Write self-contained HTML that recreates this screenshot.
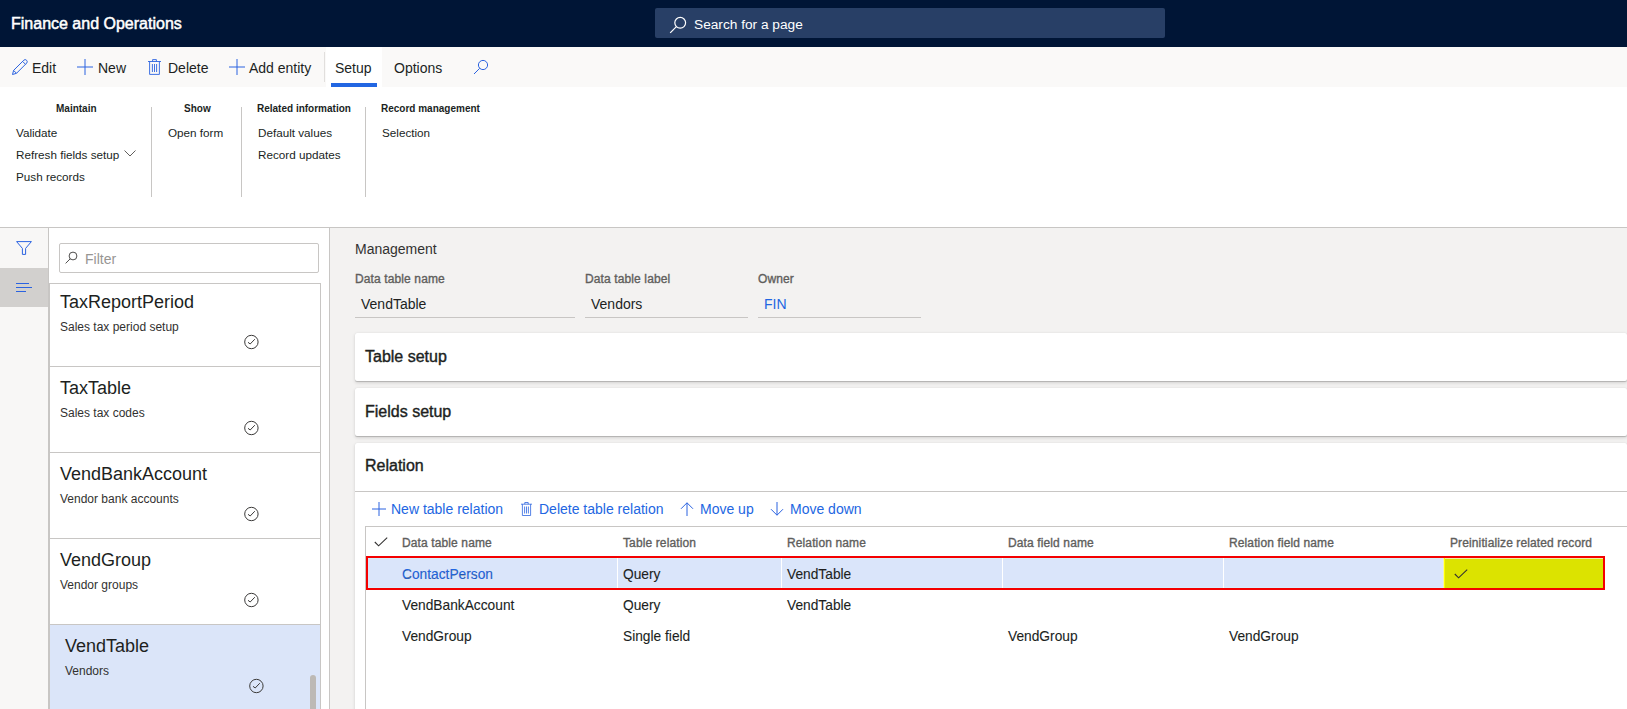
<!DOCTYPE html>
<html><head><meta charset="utf-8">
<style>
*{box-sizing:border-box;margin:0;padding:0}
html,body{width:1627px;height:709px;overflow:hidden;background:#fff;font-family:"Liberation Sans",sans-serif;color:#201f1e}
.a{position:absolute;white-space:nowrap;line-height:16px}
svg.a{line-height:0}
#hdr{position:absolute;left:0;top:0;width:1627px;height:47px;background:#001536}
#search{position:absolute;left:655px;top:8px;width:510px;height:30px;background:#283f66;border-radius:2px}
#tb{position:absolute;left:0;top:47px;width:1627px;height:40px;background:#faf9f8}
.tt{font-size:14px;color:#201f1e}
.rh{font-size:10px;font-weight:bold;color:#201f1e}
.ri{font-size:11.7px;color:#201f1e}
.vsep{position:absolute;width:1px;background:#c8c6c4}
#line227{position:absolute;left:0;top:227px;width:1627px;height:1px;background:#c8c6c4}
#rail{position:absolute;left:0;top:228px;width:49px;height:481px;background:#f8f7f6;border-right:1px solid #c8c6c4}
#panel{position:absolute;left:49px;top:228px;width:281px;height:481px;background:#fff;border-right:1px solid #c8c6c4}
#main{position:absolute;left:330px;top:228px;width:1297px;height:481px;background:#f3f2f1}
.item{position:absolute;left:0;width:271px;height:86px;border-bottom:1px solid #c8c6c4;background:#fff}
.it{font-size:18px;color:#201f1e}
.is{font-size:12px;color:#323130}
.lbl{font-size:12px;color:#605e5c;-webkit-text-stroke:0.35px #605e5c;letter-spacing:0.12px}
.val{font-size:14px;color:#201f1e}
.card{position:absolute;left:25px;width:1272px;background:#fff;border-radius:2px;box-shadow:0 1px 0 rgba(0,0,0,.07),0 1.6px 3.6px rgba(0,0,0,.13),0 .3px .9px rgba(0,0,0,.11)}
.ch{font-size:16px;color:#201f1e;-webkit-text-stroke:0.4px #201f1e}
.act{font-size:14px;color:#2266e2}
.gh{font-size:12px;color:#605e5c;-webkit-text-stroke:0.35px #605e5c;letter-spacing:0.12px}
.gc{font-size:13.75px;color:#201f1e;-webkit-text-stroke:0.1px #201f1e}
</style></head>
<body>
<div id="hdr">
  <div class="a" style="left:11px;top:16px;font-size:16px;color:#fff;-webkit-text-stroke:0.5px #fff">Finance and Operations</div>
  <div id="search">
    <svg class="a" style="left:14px;top:8px" width="18" height="18" viewBox="0 0 18 18"><circle cx="11.2" cy="6.8" r="5.4" fill="none" stroke="#fff" stroke-width="1.2"/><line x1="7.4" y1="10.6" x2="1.2" y2="16.8" stroke="#fff" stroke-width="1.2"/></svg>
    <div class="a" style="left:39px;top:9px;font-size:13.7px;color:#fff">Search for a page</div>
  </div>
</div>

<div id="tb">
  <!-- pencil -->
  <svg class="a" style="left:11px;top:11px" width="18" height="18" viewBox="0 0 18 18"><path d="M1.5 16.5 L2.6 12.4 L12.8 2.2 Q14.2 0.9 15.6 2.3 Q16.9 3.7 15.7 5.1 L5.5 15.3 Z M11.6 3.4 L14.5 6.3 M2.6 12.4 L5.5 15.3" fill="none" stroke="#2b63e0" stroke-width="1" stroke-linejoin="round"/></svg>
  <div class="a tt" style="left:32px;top:13px">Edit</div>
  <!-- plus -->
  <svg class="a" style="left:77px;top:12px" width="16" height="16" viewBox="0 0 16 16"><path d="M8 0 V16 M0 8 H16" stroke="#2b63e0" stroke-width="1"/></svg>
  <div class="a tt" style="left:98px;top:13px">New</div>
  <!-- trash -->
  <svg class="a" style="left:148px;top:12px" width="14" height="16" viewBox="0 0 14 16"><path d="M0 2.5 H13 M4.6 2.5 V0.6 H8.4 V2.5 M1.6 2.5 V15.4 H11.4 V2.5 M4.4 5 V13 M6.5 5 V13 M8.6 5 V13" fill="none" stroke="#2b63e0" stroke-width="0.9"/></svg>
  <div class="a tt" style="left:168px;top:13px">Delete</div>
  <svg class="a" style="left:229px;top:12px" width="16" height="16" viewBox="0 0 16 16"><path d="M8 0 V16 M0 8 H16" stroke="#2b63e0" stroke-width="1"/></svg>
  <div class="a tt" style="left:249px;top:13px">Add entity</div>
  <div class="vsep" style="left:324px;top:5px;height:30px;background:#e1dfdd"></div>
  <div class="a" style="left:326px;top:0;width:56px;height:40px;background:#fff"></div>
  <div class="a tt" style="left:335px;top:13px">Setup</div>
  <div class="a" style="left:331px;top:36px;width:46px;height:4px;background:#2266e2"></div>
  <div class="a tt" style="left:394px;top:13px">Options</div>
  <svg class="a" style="left:473px;top:12px" width="16" height="16" viewBox="0 0 16 16"><circle cx="10" cy="6" r="4.6" fill="none" stroke="#2b63e0" stroke-width="1"/><line x1="6.7" y1="9.3" x2="1" y2="15" stroke="#2b63e0" stroke-width="1"/></svg>
</div>

<!-- ribbon -->
<div class="a rh" style="left:56px;top:101px">Maintain</div>
<div class="a rh" style="left:184px;top:101px">Show</div>
<div class="a rh" style="left:257px;top:101px">Related information</div>
<div class="a rh" style="left:381px;top:101px">Record management</div>
<div class="vsep" style="left:151px;top:107px;height:90px"></div>
<div class="vsep" style="left:241px;top:107px;height:90px"></div>
<div class="vsep" style="left:365px;top:107px;height:90px"></div>
<div class="a ri" style="left:16px;top:125px">Validate</div>
<div class="a ri" style="left:16px;top:147px">Refresh fields setup</div>
<svg class="a" style="left:124px;top:150px" width="12" height="7" viewBox="0 0 12 7"><path d="M0.5 0.5 L6 6 L11.5 0.5" fill="none" stroke="#605e5c" stroke-width="1"/></svg>
<div class="a ri" style="left:16px;top:169px">Push records</div>
<div class="a ri" style="left:168px;top:125px">Open form</div>
<div class="a ri" style="left:258px;top:125px">Default values</div>
<div class="a ri" style="left:258px;top:147px">Record updates</div>
<div class="a ri" style="left:382px;top:125px">Selection</div>

<div id="line227"></div>
<div id="rail">
  <svg class="a" style="left:16px;top:13px" width="16" height="14" viewBox="0 0 16 14"><path d="M0.6 0.6 H15.4 L9.6 7.4 V13.4 H6.4 V7.4 Z" fill="none" stroke="#2b63e0" stroke-width="1" stroke-linejoin="round"/></svg>
  <div class="a" style="left:0;top:40px;width:48px;height:39px;background:#d2d0ce"></div>
  <svg class="a" style="left:16px;top:55px" width="16" height="10" viewBox="0 0 16 10"><path d="M0 0.5 H13 M0 4.5 H16 M0 8.5 H10" stroke="#2b63e0" stroke-width="1"/></svg>
</div>
<div id="panel">
  <div class="a" style="left:10px;top:15px;width:260px;height:30px;border:1px solid #c8c6c4;border-radius:2px;background:#fff">
    <svg class="a" style="left:5px;top:7px" width="14" height="14" viewBox="0 0 14 14"><circle cx="8" cy="5" r="3.9" fill="none" stroke="#3b3a39" stroke-width="0.9"/><line x1="5.2" y1="7.8" x2="0.6" y2="12.4" stroke="#3b3a39" stroke-width="0.9"/></svg>
    <div class="a" style="left:25px;top:7px;font-size:14px;color:#979593">Filter</div>
  </div>
  <div class="a" style="left:0;top:55px;width:272px;height:426px;border-left:1px solid #c8c6c4;border-top:1px solid #c8c6c4;border-right:1px solid #c8c6c4;overflow:hidden">
    <div class="item" style="top:-3px"><div class="a it" style="left:10px;top:11px;line-height:20px">TaxReportPeriod</div><div class="a is" style="left:10px;top:38px">Sales tax period setup</div><svg class="a" style="left:193px;top:53px" width="16" height="16" viewBox="0 0 16 16"><circle cx="8.4" cy="8" r="6.7" fill="none" stroke="#3b3a39" stroke-width="1"/><path d="M5 8.3 L7.2 10 L11.8 5.2" fill="none" stroke="#3b3a39" stroke-width="1"/></svg></div>
    <div class="item" style="top:83px"><div class="a it" style="left:10px;top:11px;line-height:20px">TaxTable</div><div class="a is" style="left:10px;top:38px">Sales tax codes</div><svg class="a" style="left:193px;top:53px" width="16" height="16" viewBox="0 0 16 16"><circle cx="8.4" cy="8" r="6.7" fill="none" stroke="#3b3a39" stroke-width="1"/><path d="M5 8.3 L7.2 10 L11.8 5.2" fill="none" stroke="#3b3a39" stroke-width="1"/></svg></div>
    <div class="item" style="top:169px"><div class="a it" style="left:10px;top:11px;line-height:20px">VendBankAccount</div><div class="a is" style="left:10px;top:38px">Vendor bank accounts</div><svg class="a" style="left:193px;top:53px" width="16" height="16" viewBox="0 0 16 16"><circle cx="8.4" cy="8" r="6.7" fill="none" stroke="#3b3a39" stroke-width="1"/><path d="M5 8.3 L7.2 10 L11.8 5.2" fill="none" stroke="#3b3a39" stroke-width="1"/></svg></div>
    <div class="item" style="top:255px"><div class="a it" style="left:10px;top:11px;line-height:20px">VendGroup</div><div class="a is" style="left:10px;top:38px">Vendor groups</div><svg class="a" style="left:193px;top:53px" width="16" height="16" viewBox="0 0 16 16"><circle cx="8.4" cy="8" r="6.7" fill="none" stroke="#3b3a39" stroke-width="1"/><path d="M5 8.3 L7.2 10 L11.8 5.2" fill="none" stroke="#3b3a39" stroke-width="1"/></svg></div>
    <div class="item" style="top:341px;background:#dbe5f9;height:90px"><div class="a it" style="left:15px;top:11px;line-height:20px">VendTable</div><div class="a is" style="left:15px;top:38px">Vendors</div><svg class="a" style="left:198px;top:53px" width="16" height="16" viewBox="0 0 16 16"><circle cx="8.4" cy="8" r="6.7" fill="none" stroke="#3b3a39" stroke-width="1"/><path d="M5 8.3 L7.2 10 L11.8 5.2" fill="none" stroke="#3b3a39" stroke-width="1"/></svg></div>
    <div class="a" style="left:260px;top:391px;width:6px;height:45px;border-radius:3px;background:#bdb9b5"></div>
  </div>
</div>

<div id="main">
  <div class="a" style="left:25px;top:13px;font-size:14px;color:#323130">Management</div>
  <div class="a lbl" style="left:25px;top:43px">Data table name</div>
  <div class="a val" style="left:31px;top:68px">VendTable</div>
  <div class="a" style="left:25px;top:89px;width:220px;height:1px;background:#c8c6c4"></div>
  <div class="a lbl" style="left:255px;top:43px">Data table label</div>
  <div class="a val" style="left:261px;top:68px">Vendors</div>
  <div class="a" style="left:255px;top:89px;width:163px;height:1px;background:#c8c6c4"></div>
  <div class="a lbl" style="left:428px;top:43px">Owner</div>
  <div class="a val" style="left:434px;top:68px;color:#2266e2">FIN</div>
  <div class="a" style="left:428px;top:89px;width:163px;height:1px;background:#c8c6c4"></div>

  <div class="card" style="top:105px;height:48px"><div class="a ch" style="left:10px;top:16px">Table setup</div></div>
  <div class="card" style="top:160px;height:48px"><div class="a ch" style="left:10px;top:16px">Fields setup</div></div>
  <div class="card" style="top:215px;height:300px">
    <div class="a ch" style="left:10px;top:15px">Relation</div>
    <div class="a" style="left:0;top:48px;width:1272px;height:1px;background:#c8c6c4"></div>
    <svg class="a" style="left:17px;top:59px" width="14" height="14" viewBox="0 0 14 14"><path d="M7 0 V14 M0 7 H14" stroke="#2b63e0" stroke-width="1"/></svg>
    <div class="a act" style="left:36px;top:58px">New table relation</div>
    
    <div class="a act" style="left:184px;top:58px">Delete table relation</div>
    <svg class="a" style="left:325px;top:59px" width="14" height="14" viewBox="0 0 14 14"><path d="M7 14 V0.8 M1 6.8 L7 0.8 L13 6.8" fill="none" stroke="#2b63e0" stroke-width="1"/></svg>
    <div class="a act" style="left:345px;top:58px">Move up</div>
    <svg class="a" style="left:415px;top:59px" width="14" height="14" viewBox="0 0 14 14"><path d="M7 0 V13.2 M1 7.2 L7 13.2 L13 7.2" fill="none" stroke="#2b63e0" stroke-width="1"/></svg>
    <div class="a act" style="left:435px;top:58px">Move down</div>
  </div>
  <svg class="a" style="left:191px;top:274px" width="12" height="14" viewBox="0 0 12 14"><path d="M0 2.2 H11 M3.8 2.2 V0.5 H7.2 V2.2 M1.4 2.2 V13.5 H9.6 V2.2 M3.6 4.5 V11.5 M5.5 4.5 V11.5 M7.4 4.5 V11.5" fill="none" stroke="#2b63e0" stroke-width="0.8"/></svg>
  <!-- grid -->
  <div class="a" style="left:35px;top:298px;width:1262px;height:200px;background:#fff;border-left:1px solid #c8c6c4;border-top:1px solid #c8c6c4"></div>
  <svg class="a" style="left:44px;top:309px" width="14" height="10" viewBox="0 0 14 10"><path d="M0.8 5 L4.6 8.8 L13.2 0.6" fill="none" stroke="#323130" stroke-width="1.1"/></svg>
  <div class="a gh" style="left:72px;top:307px">Data table name</div>
  <div class="a gh" style="left:293px;top:307px">Table relation</div>
  <div class="a gh" style="left:457px;top:307px">Relation name</div>
  <div class="a gh" style="left:678px;top:307px">Data field name</div>
  <div class="a gh" style="left:899px;top:307px">Relation field name</div>
  <div class="a gh" style="left:1120px;top:307px">Preinitialize related record</div>
  <div class="a" style="left:36px;top:328px;width:1239px;height:34px;border:2px solid #f40000;background:#dae5fa"></div>
  <div class="a" style="left:38px;top:330px;width:1235px;height:1px;background:#d6eefa"></div>
  <div class="a" style="left:38px;top:359px;width:1235px;height:1px;background:#d6eefa"></div>
  <div class="a" style="left:287px;top:330px;width:1px;height:30px;background:#fff"></div>
  <div class="a" style="left:451px;top:330px;width:1px;height:30px;background:#fff"></div>
  <div class="a" style="left:672px;top:330px;width:1px;height:30px;background:#fff"></div>
  <div class="a" style="left:893px;top:330px;width:1px;height:30px;background:#fff"></div>
  <div class="a" style="left:1113px;top:330px;width:160px;height:30px;background:#dce300;border-left:1px solid #f2f5b0"></div>
  <div class="a" style="left:1114px;top:330px;width:1px;height:30px;background:#ffff00"></div>
  <div class="a" style="left:1115px;top:330px;width:158px;height:1px;background:#eef0a0"></div>
  <svg class="a" style="left:1124px;top:341px" width="14" height="10" viewBox="0 0 14 10"><path d="M0.8 5 L4.6 8.8 L13.2 0.6" fill="none" stroke="#323130" stroke-width="1.1"/></svg>
  <div class="a gc" style="left:72px;top:339px;color:#2266e2">ContactPerson</div>
  <div class="a gc" style="left:293px;top:339px">Query</div>
  <div class="a gc" style="left:457px;top:339px">VendTable</div>
  <div class="a gc" style="left:72px;top:370px">VendBankAccount</div>
  <div class="a gc" style="left:293px;top:370px">Query</div>
  <div class="a gc" style="left:457px;top:370px">VendTable</div>
  <div class="a gc" style="left:72px;top:401px">VendGroup</div>
  <div class="a gc" style="left:293px;top:401px">Single field</div>
  <div class="a gc" style="left:678px;top:401px">VendGroup</div>
  <div class="a gc" style="left:899px;top:401px">VendGroup</div>
</div>
</body></html>
